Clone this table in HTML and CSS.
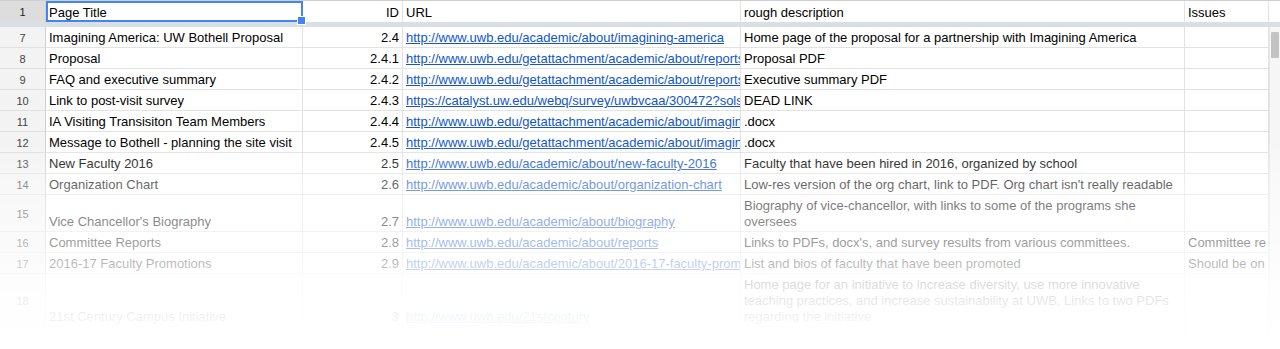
FILE: index.html
```html
<!DOCTYPE html>
<html lang="en">

<head>
  <meta charset="UTF-8">
  <meta name="viewport" content="width=device-width, initial-scale=1.0">
  <title>Site Inventory</title>
  <link rel="stylesheet" href="styles.css">
</head>

<body>
  <div class="sheet">
    <div class="grid">
      <div class="row head-row">
        <div class="num selected-num">1</div>
        <div class="cell selected">Page Title</div>
        <div class="cell id">ID</div>
        <div class="cell">URL</div>
        <div class="cell">rough description</div>
        <div class="cell">Issues</div>
      </div>
      <div class="freeze"></div>

      <div class="row">
        <div class="num">7</div>
        <div class="cell">Imagining America: UW Bothell Proposal</div>
        <div class="cell id">2.4</div>
        <div class="cell"><a href="#">http://www.uwb.edu/academic/about/imagining-america</a></div>
        <div class="cell">Home page of the proposal for a partnership with Imagining America</div>
        <div class="cell"></div>
      </div>
      <div class="row">
        <div class="num">8</div>
        <div class="cell">Proposal</div>
        <div class="cell id">2.4.1</div>
        <div class="cell"><a href="#">http://www.uwb.edu/getattachment/academic/about/reports</a></div>
        <div class="cell">Proposal PDF</div>
        <div class="cell"></div>
      </div>
      <div class="row">
        <div class="num">9</div>
        <div class="cell">FAQ and executive summary</div>
        <div class="cell id">2.4.2</div>
        <div class="cell"><a href="#">http://www.uwb.edu/getattachment/academic/about/reports</a></div>
        <div class="cell">Executive summary PDF</div>
        <div class="cell"></div>
      </div>
      <div class="row">
        <div class="num">10</div>
        <div class="cell">Link to post-visit survey</div>
        <div class="cell id">2.4.3</div>
        <div class="cell"><a href="#">https://catalyst.uw.edu/webq/survey/uwbvcaa/300472?sols</a></div>
        <div class="cell">DEAD LINK</div>
        <div class="cell"></div>
      </div>
      <div class="row">
        <div class="num">11</div>
        <div class="cell">IA Visiting Transisiton Team Members</div>
        <div class="cell id">2.4.4</div>
        <div class="cell"><a href="#">http://www.uwb.edu/getattachment/academic/about/imagin</a></div>
        <div class="cell">.docx</div>
        <div class="cell"></div>
      </div>
      <div class="row">
        <div class="num">12</div>
        <div class="cell">Message to Bothell - planning the site visit</div>
        <div class="cell id">2.4.5</div>
        <div class="cell"><a href="#">http://www.uwb.edu/getattachment/academic/about/imagin</a></div>
        <div class="cell">.docx</div>
        <div class="cell"></div>
      </div>
      <div class="row">
        <div class="num">13</div>
        <div class="cell">New Faculty 2016</div>
        <div class="cell id">2.5</div>
        <div class="cell"><a href="#">http://www.uwb.edu/academic/about/new-faculty-2016</a></div>
        <div class="cell">Faculty that have been hired in 2016, organized by school</div>
        <div class="cell"></div>
      </div>
      <div class="row">
        <div class="num">14</div>
        <div class="cell">Organization Chart</div>
        <div class="cell id">2.6</div>
        <div class="cell"><a href="#">http://www.uwb.edu/academic/about/organization-chart</a></div>
        <div class="cell">Low-res version of the org chart, link to PDF. Org chart isn't really readable</div>
        <div class="cell"></div>
      </div>
      <div class="row tall-2">
        <div class="num">15</div>
        <div class="cell">Vice Chancellor's Biography</div>
        <div class="cell id">2.7</div>
        <div class="cell"><a href="#">http://www.uwb.edu/academic/about/biography</a></div>
        <div class="cell wrap">Biography of vice-chancellor, with links to some of the programs she oversees</div>
        <div class="cell"></div>
      </div>
      <div class="row">
        <div class="num">16</div>
        <div class="cell">Committee Reports</div>
        <div class="cell id">2.8</div>
        <div class="cell"><a href="#">http://www.uwb.edu/academic/about/reports</a></div>
        <div class="cell">Links to PDFs, docx's, and survey results from various committees.</div>
        <div class="cell">Committee re</div>
      </div>
      <div class="row">
        <div class="num">17</div>
        <div class="cell">2016-17 Faculty Promotions</div>
        <div class="cell id">2.9</div>
        <div class="cell"><a href="#">http://www.uwb.edu/academic/about/2016-17-faculty-prom</a></div>
        <div class="cell">List and bios of faculty that have been promoted</div>
        <div class="cell">Should be on</div>
      </div>
      <div class="row tall-3">
        <div class="num">18</div>
        <div class="cell">21st Century Campus Initiative</div>
        <div class="cell id">3</div>
        <div class="cell"><a href="#">http://www.uwb.edu/21stcentury</a></div>
        <div class="cell wrap">Home page for an initiative to increase diversity, use more innovative teaching practices, and increase sustainability at UWB. Links to two PDFs regarding the initiative</div>
        <div class="cell"></div>
      </div>
      <div class="row">
        <div class="num"></div>
        <div class="cell"></div>
        <div class="cell id"></div>
        <div class="cell"></div>
        <div class="cell"></div>
        <div class="cell"></div>
      </div>
    </div>

    <div class="scrollbar">
      <div class="scroll-top"></div>
      <div class="track">
        <div class="thumb"></div>
      </div>
    </div>

    <div class="fade"></div>
  </div>
</body>

</html>
```

FILE: styles.css
```css
* {
  margin: 0;
  padding: 0;
  box-sizing: border-box;
}

body {
  width: 1280px;
  height: 349px;
  overflow: hidden;
  background: #ffffff;
  font-family: 'Liberation Sans', Arial, sans-serif;
  font-size: 13px;
  color: #000000;
}

.sheet {
  position: relative;
  display: flex;
  height: 349px;
  border-top: 1px solid #cfcfcf;
}

.grid {
  width: 1269px;
  flex: none;
}

.row {
  display: grid;
  grid-template-columns: 46px 257px 100px 338px 444px 84px;
  height: 21px;
}

.row.tall-2 {
  height: 37px;
}

.row.tall-3 {
  height: 53px;
}

.cell,
.num {
  display: flex;
  align-items: flex-end;
  padding: 0 3px 1px;
  line-height: 16px;
  white-space: nowrap;
  overflow: hidden;
  border-right: 1px solid #e2e2e2;
  border-bottom: 1px solid #e2e2e2;
}

.num {
  justify-content: center;
  align-items: center;
  padding: 1px 0 0;
  font-size: 11px;
  color: #444444;
  background: #f3f3f3;
  border-right-color: #cfcfcf;
  border-bottom-color: #e0e0e0;
}

.num.selected-num {
  background: #dddddd;
  color: #222222;
}

.cell.id {
  justify-content: flex-end;
}

.cell.wrap {
  white-space: normal;
}

.cell a {
  color: #1155cc;
  text-decoration: underline;
}

.head-row .cell,
.head-row .num {
  border-bottom: none;
}

.cell.selected {
  position: relative;
  overflow: visible;
}

.cell.selected::before {
  content: '';
  position: absolute;
  left: 0;
  top: 0;
  right: -1px;
  bottom: 0;
  border: 2px solid #4285f4;
}

.cell.selected::after {
  content: '';
  position: absolute;
  right: -4px;
  bottom: -3px;
  width: 7px;
  height: 7px;
  background: #4285f4;
  border: 1px solid #ffffff;
  z-index: 2;
}

.freeze {
  height: 5px;
  background: #dadfe6;
}

.scrollbar {
  width: 11px;
  flex: none;
  display: flex;
  flex-direction: column;
}

.scroll-top {
  height: 26px;
  border-bottom: 5px solid #dadfe6;
}

.track {
  flex: 1;
  background: #f6f6f6;
  border-left: 1px solid #e6e6e6;
  padding: 5px 1px 0 1px;
}

.thumb {
  height: 26px;
  background: #c3c3c3;
  border-radius: 1px;
}

.fade {
  position: absolute;
  left: 0;
  top: 0;
  right: 0;
  bottom: 0;
  pointer-events: none;
  background: linear-gradient(to bottom,
      rgba(255, 255, 255, 0) 0px,
      rgba(255, 255, 255, 0) 140px,
      rgba(255, 255, 255, 0.2) 163px,
      rgba(255, 255, 255, 0.4) 184px,
      rgba(255, 255, 255, 0.6) 242px,
      rgba(255, 255, 255, 0.72) 263px,
      rgba(255, 255, 255, 0.86) 284px,
      rgba(255, 255, 255, 0.94) 316px,
      rgba(255, 255, 255, 0.98) 330px,
      rgba(255, 255, 255, 0.99) 349px);
}
```
